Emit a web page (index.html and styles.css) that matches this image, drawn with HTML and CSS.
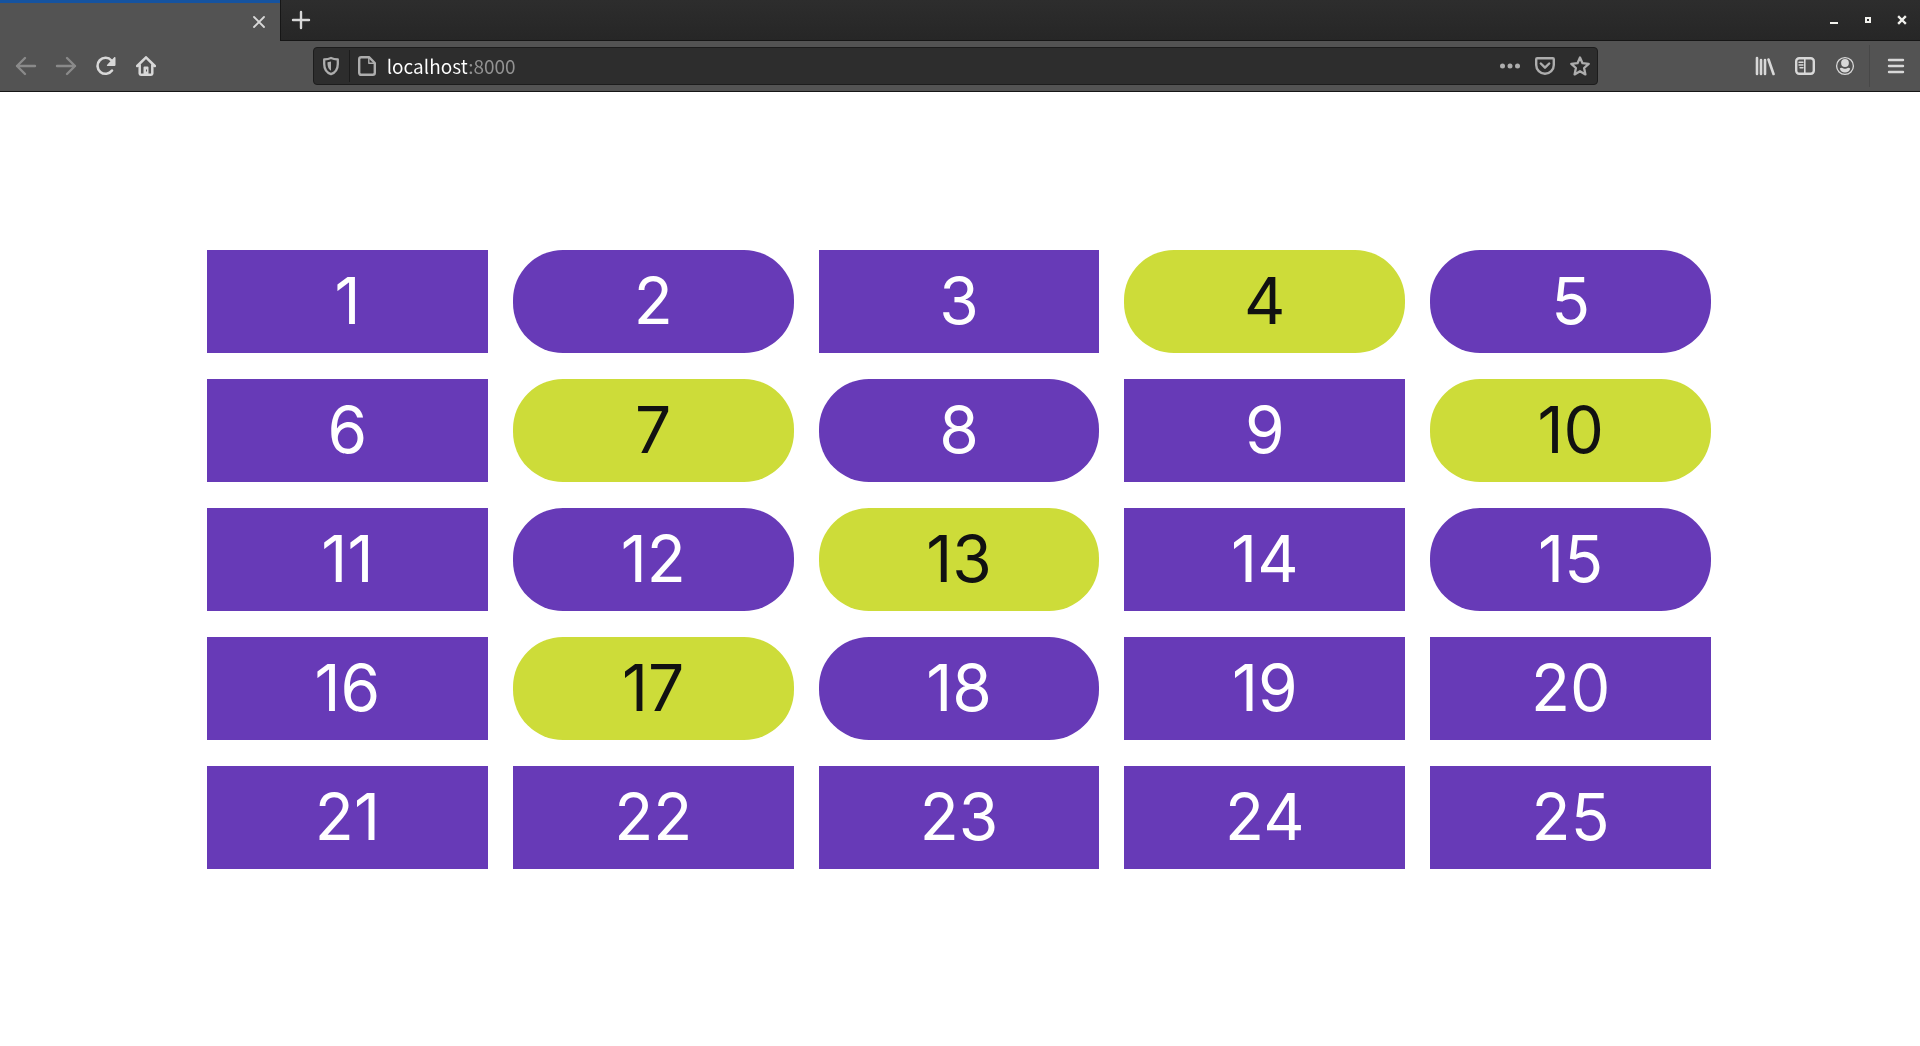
FILE: index.html
```html
<!DOCTYPE html>
<html lang="en">
<head>
    <meta charset="UTF-8">
    <meta name="viewport" content="width=device-width, initial-scale=1.0">
    <title>localhost:8000</title>
    <link rel="stylesheet" href="styles.css">
</head>
<body>
    <!-- Browser chrome -->
    <header class="browser">
        <div class="tab-bar">
            <div class="tab">
                <button class="tab-close" aria-label="Close tab">
                    <svg width="14" height="14" viewBox="0 0 14 14"><path d="M2 2l10 10M12 2L2 12" stroke-width="1.8"/></svg>
                </button>
            </div>
            <button class="new-tab" aria-label="New tab">
                <svg width="20" height="20" viewBox="0 0 20 20"><path d="M10 2v16M2 10h16" stroke-width="2.4"/></svg>
            </button>
            <div class="window-buttons">
                <button aria-label="Minimize"><svg width="10" height="10" viewBox="0 0 10 10"><path class="fill" d="M1 7h8v2H1z"/></svg></button>
                <button aria-label="Maximize"><svg width="10" height="10" viewBox="0 0 10 10"><path class="fill" fill-rule="evenodd" d="M2 2h6v6H2zM4 4v2h2V4z"/></svg></button>
                <button aria-label="Close"><svg width="10" height="10" viewBox="0 0 10 10"><path d="M2 2l6 6M8 2L2 8" stroke-width="2.4" stroke-linecap="square"/></svg></button>
            </div>
        </div>

        <nav class="toolbar">
            <button class="tool" aria-label="Back" disabled>
                <svg width="22" height="20" viewBox="0 0 22 20"><path d="M20 10H2M10 2L2 10l8 8" stroke-width="2.4"/></svg>
            </button>
            <button class="tool" aria-label="Forward" disabled>
                <svg width="22" height="20" viewBox="0 0 22 20"><path d="M2 10h18M12 2l8 8-8 8" stroke-width="2.4"/></svg>
            </button>
            <button class="tool" aria-label="Reload">
                <svg width="20" height="20" viewBox="0 0 20 20"><path d="M16 14.500A8 8 0 1 1 15.500 4.500" stroke-width="2.600"/><path class="fill" d="M18.200 1.200c.6-.5 1.300-.2 1.300.6V9q0 1-1 1h-6.700c-1 0-1.300-.7-.6-1.300z"/></svg>
            </button>
            <button class="tool" aria-label="Home">
                <svg width="20" height="20" viewBox="0 0 20 20"><path d="M1.200 10L10 1.300l8.800 8.700M3.700 9v8.500q0 1.200 1.200 1.200h10.200q1.200 0 1.200-1.200V9" stroke-width="2.500"/><path class="fill" fill-rule="evenodd" d="M7.500 18v-6.500q0-1 1-1h3q1 0 1 1V18zM10 13.500v2h1v-2z"/></svg>
            </button>

            <div class="spacer"></div>
            <div class="url-bar">
                <button class="url-button" aria-label="Tracking protection">
                    <svg width="18" height="20" viewBox="0 0 18 20"><path d="M9 2c2.500 1.200 4.500 1.400 6.800 1.500V8c0 5-2.300 8.500-6.800 10.200C4.500 16.500 2.200 13 2.200 8V3.500C4.500 3.400 6.500 3.200 9 2z" stroke-width="2.300"/><path class="fill" d="M9 5.500v9.200C6.700 13.300 5.500 11 5.500 8V6.200z"/></svg>
                </button>
                <button class="url-button page-info" aria-label="Site information">
                    <svg width="18" height="20" viewBox="0 0 18 20"><path d="M3 1.200h8l5.800 5.800v9.800q0 2-2 2H3.200q-2 0-2-2V3.200q0-2 2-2" stroke-width="2.400"/><path d="M10.800 1.500v5.700h5.700" stroke-width="1.400"/></svg>
                </button>
                <input class="url" type="text" value="localhost:8000" aria-label="Address">
                <button class="url-button" aria-label="Page actions">
                    <svg width="20" height="20" viewBox="0 0 20 20"><circle class="fill" cx="2.500" cy="10" r="2.500"/><circle class="fill" cx="10" cy="10" r="2.500"/><circle class="fill" cx="17.500" cy="10" r="2.500"/></svg>
                </button>
                <button class="url-button" aria-label="Save to Pocket">
                    <svg width="20" height="20" viewBox="0 0 20 20"><path d="M2.200 2.200h15.600q1 0 1 1V9a8.800 8.800 0 0 1-17.600 0V3.200q0-1 1-1z" stroke-width="2.400"/><path d="M5.800 7.500L10 11.700l4.200-4.200" stroke-width="2.400"/></svg>
                </button>
                <button class="url-button" aria-label="Bookmark this page">
                    <svg width="20" height="20" viewBox="0 0 20 20"><path d="M10 1.500l2.500 5.700 6.200.6-4.600 4.200 1.300 6.400L10 15.200l-5.400 3.200L5.900 12 1.300 7.800l6.200-.6z" stroke-width="2.300"/></svg>
                </button>
            </div>
            <div class="spacer"></div>

            <button class="tool" aria-label="Library">
                <svg width="20" height="20" viewBox="0 0 20 20"><path d="M2 2v16M6 4v14M10 4v14M13.500 3.500L18.500 18" stroke-width="2.600"/></svg>
            </button>
            <button class="tool" aria-label="Sidebar">
                <svg width="20" height="18" viewBox="0 0 20 18"><rect x="1.200" y="1.200" width="17.600" height="15.600" rx="3" stroke-width="2.400"/><path d="M9.800 1v16" stroke-width="1.600"/><path d="M4 5.200h4M4 8h4M5 10.800h3" stroke-width="1.400"/></svg>
            </button>
            <button class="tool" aria-label="Account">
                <svg width="20" height="20" viewBox="0 0 20 20"><circle cx="10" cy="10" r="8.400" stroke-width="1.300"/><circle class="fill" cx="10" cy="7" r="3.900"/><path class="fill" d="M4.800 12.500C6 11.500 7 11.800 8 12.300q2 1 4 0c1-.5 2-.8 3.200.2-.5 2.500-2.500 3.900-5.200 3.900s-4.700-1.400-5.200-3.900z"/></svg>
            </button>
            <span class="divider"></span>
            <button class="tool" aria-label="Open menu">
                <svg width="18" height="18" viewBox="0 0 18 18"><path d="M2 3h14M2 9h14M2 15h14" stroke-width="2.400"/></svg>
            </button>
        </nav>
    </header>

    <!-- Number grid -->
    <main class="grid">
        <div class="box">1</div>
        <div class="box round">2</div>
        <div class="box">3</div>
        <div class="box round lime">4</div>
        <div class="box round">5</div>
        <div class="box">6</div>
        <div class="box round lime">7</div>
        <div class="box round">8</div>
        <div class="box">9</div>
        <div class="box round lime">10</div>
        <div class="box">11</div>
        <div class="box round">12</div>
        <div class="box round lime">13</div>
        <div class="box">14</div>
        <div class="box round">15</div>
        <div class="box">16</div>
        <div class="box round lime">17</div>
        <div class="box round">18</div>
        <div class="box">19</div>
        <div class="box">20</div>
        <div class="box">21</div>
        <div class="box">22</div>
        <div class="box">23</div>
        <div class="box">24</div>
        <div class="box">25</div>
    </main>
</body>
</html>
```
FILE: styles.css
```css
* {
    box-sizing: border-box;
}

body {
    margin: 0;
    background: #fff;
    font-family: Inter, sans-serif;
}

button {
    display: flex;
    justify-content: center;
    align-items: center;
    padding: 0;
    border: none;
    background: none;
    color: #d8d8d8;
}

svg {
    fill: none;
    stroke: currentColor;
    stroke-linecap: round;
    stroke-linejoin: round;
}

.fill {
    fill: currentColor;
    stroke: none;
}

/* Browser chrome */
.browser {
    border-bottom: 1px solid #161616;
    background: #535353;
}

.tab-bar {
    display: flex;
    height: 41px;
    background: linear-gradient(#2d2d2d, #262626);
}

.tab {
    display: flex;
    justify-content: flex-end;
    align-items: center;
    width: 280px;
    padding-right: 10px;
    border-top: 3px solid #1553a0;
    background: #535353;
}

.tab-close {
    width: 22px;
    height: 22px;
}

.new-tab {
    width: 41px;
    border-left: 1px solid #161616;
    border-bottom: 1px solid #161616;
}

.window-buttons {
    display: flex;
    flex: 1;
    justify-content: flex-end;
    padding-right: 1px;
    border-bottom: 1px solid #161616;
}

.window-buttons button {
    width: 34px;
    color: #f2f2ee;
}

.toolbar {
    display: flex;
    align-items: center;
    height: 50px;
    padding: 0 4px 0 6px;
}

.tool {
    width: 40px;
    height: 40px;
}

.tool:disabled {
    color: #8a8a8a;
}

.spacer {
    flex: 4;
}

.divider {
    width: 1px;
    height: 42px;
    margin: 0 6px 0 4px;
    background: #484848;
}

.url-bar {
    display: flex;
    flex: 35;
    align-items: center;
    height: 38px;
    border: 1px solid #1c1c1c;
    border-radius: 4px;
    background: #2d2d2d;
}

.url-button {
    width: 35px;
    height: 32px;
    color: #adadad;
}

.page-info {
    border-left: 1px solid #1c1c1c;
}

/* host is white, port is grey */
.url {
    flex: 1;
    min-width: 0;
    padding: 0 0 0 3px;
    border: none;
    outline: none;
    background: linear-gradient(90deg, #fff 83px, #929292 83px);
    -webkit-background-clip: text;
    background-clip: text;
    color: transparent;
    font-family: "Noto Sans CJK SC", sans-serif;
    font-size: 19px;
    line-height: 30px;
}

/* Number grid */
.grid {
    display: grid;
    grid-template-columns: repeat(5, 1fr);
    gap: 26px 25px;
    width: 80%;
    margin: 158px auto 0;
    padding: 0 17px 0 15px;
}

.box {
    padding: 12px 13px 14px;
    background: #673ab7;
    color: #fff;
    font-size: 64px;
    line-height: 77px;
    text-align: center;
}

.round {
    border-radius: 50px;
}

.lime {
    background: #cddc39;
    color: #111;
}
```
